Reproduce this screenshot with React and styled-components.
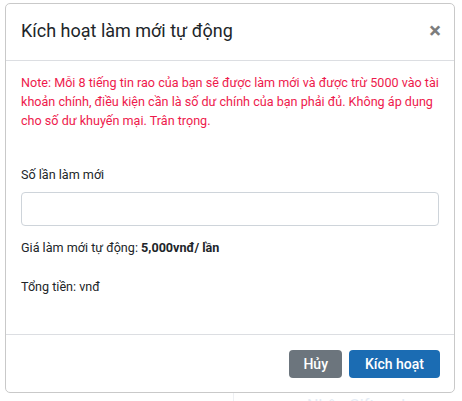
import React from "react";
import styled, { createGlobalStyle } from "styled-components";

const GlobalStyle = createGlobalStyle`
  html, body {
    margin: 0;
    padding: 0;
    background: #fff;
    font-family: Roboto, "Liberation Sans", Arial, sans-serif;
    color: #212529;
  }
  * { box-sizing: border-box; }
`;

const App = () => {
  return (
    <Page>
      <GlobalStyle />
      <Modal>
        <Header>
          <Title>Kích hoạt làm mới tự động</Title>
          <CloseButton aria-label="Close">×</CloseButton>
        </Header>
        <Body>
          <Note>
            Note: Mỗi 8 tiếng tin rao của bạn sẽ được làm mới và được trừ 5000 vào tài
            khoản chính, điều kiện cần là số dư chính của bạn phải đủ. Không áp dụng
            cho số dư khuyến mại. Trân trọng.
          </Note>
          <Label>Số lần làm mới</Label>
          <Input type="text" />
          <InfoLine $gap={12}>
            Giá làm mới tự động: <b>5,000vnđ/ lần</b>
          </InfoLine>
          <InfoLine $gap={20}>Tổng tiền: vnđ</InfoLine>
        </Body>
        <Footer>
          <Button $variant="secondary">Hủy</Button>
          <Button $variant="primary">Kích hoạt</Button>
        </Footer>
      </Modal>
      <BackdropHint>
        <span>Nhập Gift code</span>
      </BackdropHint>
    </Page>
  );
};

export default App;

const Page = styled.div`
  padding: 3px 0 0 5px;
  height: 401px;
  overflow: hidden;
`;

const Modal = styled.div`
  width: 450px;
  background: #fff;
  border: 1px solid #c9c9c9;
  border-radius: 5px;
`;

const Header = styled.div`
  display: flex;
  align-items: center;
  justify-content: space-between;
  padding: 14px 13px 16px 15px;
  border-bottom: 1px solid #dcdee2;
`;

const Title = styled.h5`
  margin: 0;
  font-size: 18px;
  font-weight: 400;
  line-height: 26px;
  color: #212529;
`;

const CloseButton = styled.button`
  border: 0;
  background: none;
  padding: 0;
  font-family: Roboto, "Liberation Sans", Arial, sans-serif;
  font-size: 22px;
  font-weight: 700;
  line-height: 22px;
  color: #7d7d7d;
  cursor: pointer;
`;

const Body = styled.div`
  padding: 12px 15px 37px;
  font-size: 12.6px;
  line-height: 19.5px;
`;

const Note = styled.p`
  margin: 0 0 35px;
  line-height: 19px;
  color: #ee1a4c;
`;

const Label = styled.label`
  display: block;
  margin-bottom: 7px;
`;

const Input = styled.input`
  display: block;
  width: 100%;
  height: 34px;
  border: 1px solid #ced4da;
  border-radius: 4px;
  padding: 6px 12px;
  font-size: 13px;
  outline: none;
`;

const InfoLine = styled.div`
  margin-top: ${(p) => p.$gap}px;
  b {
    font-weight: 700;
  }
`;

const Footer = styled.div`
  display: flex;
  justify-content: flex-end;
  gap: 7px;
  padding: 15px 14px 14px;
  border-top: 1px solid #dcdee2;
`;

const Button = styled.button`
  border: 0;
  border-radius: 4px;
  padding: 4px ${(p) => (p.$variant === "primary" ? 16 : 14)}px;
  height: 28px;
  font-family: Roboto, "Liberation Sans", Arial, sans-serif;
  font-size: 14px;
  font-weight: 500;
  line-height: 20px;
  color: #fff;
  background: ${(p) => (p.$variant === "primary" ? "#1b6cb3" : "#6c757d")};
  cursor: pointer;
`;

const BackdropHint = styled.div`
  margin-left: 228px;
  height: 20px;
  border-left: 1px solid #eef0f3;
  padding-left: 73px;
  padding-top: 3px;
  span {
    font-size: 16px;
    line-height: 16px;
    color: #e4ebf4;
  }
`;
